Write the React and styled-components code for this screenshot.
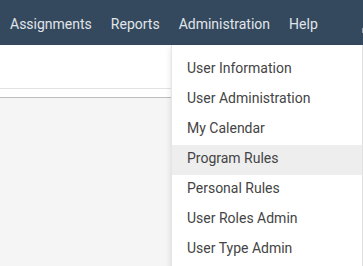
import React from "react";
import styled, { createGlobalStyle } from "styled-components";

const Global = createGlobalStyle`
  html, body { margin: 0; padding: 0; }
  body { font-family: Roboto, "Noto Sans", sans-serif; background: #f5f5f5; overflow: hidden; }
`;

const Page = styled.div`
  width: 363px;
  height: 266px;
  position: relative;
  overflow: hidden;
  background: #f5f5f5;
`;

const NavBar = styled.nav`
  height: 45px;
  box-sizing: border-box;
  background: #34495e;
  display: flex;
  align-items: center;
  padding: 3px 0 0 10px;
  gap: 19px;
  position: relative;
`;

const NavItem = styled.span`
  color: #e1e5e9;
  font-size: 14px;
  line-height: 1;
  white-space: nowrap;
`;

const Header = styled.div`
  height: 43px;
  background: #fff;
  border-bottom: 1px solid #e2e2e2;
`;

const SubHeader = styled.div`
  height: 8px;
  background: #fff;
  border-bottom: 1px solid #bdbdbd;
`;

const Edge = styled.div`
  position: absolute;
  right: 0;
  top: 28px;
  width: 1px;
  height: 5px;
  background: #9aa3ad;
`;

const Menu = styled.ul`
  position: absolute;
  left: 171px;
  top: 45px;
  width: 190px;
  margin: 0;
  padding: 10px 0;
  list-style: none;
  background: #fff;
  border-left: 1px solid #e6e6e6;
  border-right: 1px solid #e0e0e0;
  box-shadow: 0 2px 6px rgba(0, 0, 0, 0.12);
`;

const MenuItem = styled.li`
  height: 30px;
  box-sizing: border-box;
  display: flex;
  align-items: center;
  padding: 0 0 5px 15px;
  font-size: 14px;
  color: #444;
  background: ${(p) => (p.$active ? "#eeeeee" : "transparent")};
`;

const items = [
  "User Information",
  "User Administration",
  "My Calendar",
  "Program Rules",
  "Personal Rules",
  "User Roles Admin",
  "User Type Admin",
];

export default function App() {
  return (
    <Page>
      <Global />
      <NavBar>
        <NavItem>Assignments</NavItem>
        <NavItem>Reports</NavItem>
        <NavItem>Administration</NavItem>
        <NavItem>Help</NavItem>
        <Edge />
      </NavBar>
      <Header />
      <SubHeader />
      <Menu>
        {items.map((t) => (
          <MenuItem key={t} $active={t === "Program Rules"}>
            {t}
          </MenuItem>
        ))}
      </Menu>
    </Page>
  );
}
